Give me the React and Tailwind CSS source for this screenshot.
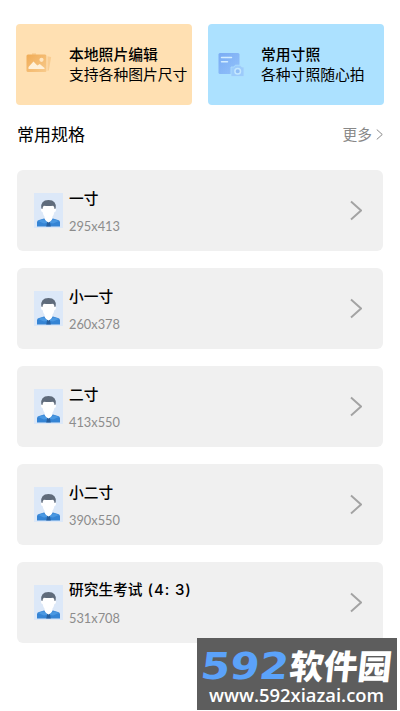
const specs = [
  { name: '一寸', size: '295x413' },
  { name: '小一寸', size: '260x378' },
  { name: '二寸', size: '413x550' },
  { name: '小二寸', size: '390x550' },
  { name: '研究生考试', ratio: '(4: 3)', size: '531x708' },
]

function PhotosIcon() {
  return (
    <svg width="28" height="24" viewBox="0 0 28 24" className="shrink-0">
      <defs>
        <linearGradient id="photos" x1="0" y1="0" x2="1" y2="1">
          <stop offset="0" stopColor="#f0ab55" />
          <stop offset="1" stopColor="#f8ca8b" />
        </linearGradient>
      </defs>
      <path d="M21 4l5.2 1-2.4 13.5-3.8 1z" fill="#f9cd92" />
      <path d="M7 1.2h4v2h-4z" fill="#f9cd92" />
      <rect x="1.5" y="2.5" width="20" height="17.5" rx="1.5" fill="url(#photos)" />
      <path d="M22 3.5v16" stroke="#ffe0b2" strokeWidth="1" />
      <circle cx="16.5" cy="7.8" r="2.1" fill="#ffe5bf" />
      <path d="M3.5 17v-2l5-5.5 3.8 4 2.5-1.5 4.7 4v1z" fill="#fff0d8" />
    </svg>
  )
}

function FormCameraIcon() {
  return (
    <svg width="28" height="26" viewBox="0 0 28 26" className="shrink-0">
      <defs>
        <linearGradient id="form" x1="0" y1="0" x2="1" y2="1">
          <stop offset="0" stopColor="#7aacf4" />
          <stop offset="1" stopColor="#92c1fa" />
        </linearGradient>
      </defs>
      <rect x="1.5" y="2" width="21" height="21" rx="1.5" fill="url(#form)" />
      <path d="M4.5 6.5h10M4.5 10.8h6" stroke="#d2edff" strokeWidth="1.5" strokeLinecap="round" />
      <path
        d="M14 16h3l1.3-1.8h5l1.3 1.8H27v9.5H14z"
        fill="#9ccbfb"
        stroke="#b0e0fe"
        strokeWidth=".8"
      />
      <circle cx="20.7" cy="20.2" r="2.8" fill="#8fbdf5" stroke="#c4e7fe" strokeWidth="1.5" />
    </svg>
  )
}

function PortraitIcon() {
  return (
    <svg width="29" height="35" viewBox="0 0 29 35" className="shrink-0">
      <rect width="29" height="35" fill="#dce8f8" />
      <path d="M3 33.5v-4.2q0-1.8 2-2.3l5-1.4h9l5 1.4q2 .5 2 2.3v4.2z" fill="#3584d4" />
      <path d="M4 28l5-1.8 5.5 3.3 5.5-3.3 5 1.8-6 2.5-4.5-1-4.5 1z" fill="#4a98e2" />
      <path d="M13.2 29h2.6l1 4.5h-4.6z" fill="#265f9f" />
      <path
        d="M8 12.5h13v2.6q1.4.5.9 2.3-.4 1.5-1.5 1.7-.5 3-2 4.6v2.2q-.9 2-3.9 3.6-3-1.6-3.9-3.6v-2.2q-1.5-1.6-2-4.6-1.1-.2-1.5-1.7-.5-1.8.9-2.3z"
        fill="#fff"
      />
      <path
        d="M7.3 15.5q-1.1-8.2 7.2-8.4 8.3.2 7.2 8.4l-1.2.5q0-2.2-1.4-3.2-4.6.6-9.2 0-1.4 1-1.4 3.2z"
        fill="#5f6b7b"
      />
    </svg>
  )
}

function Chevron({ className, strokeWidth }) {
  return (
    <svg viewBox="0 0 12 20" className={className} fill="none">
      <path d="M1 1l10 9-10 9" stroke="currentColor" strokeWidth={strokeWidth} />
    </svg>
  )
}

function FeatureCard({ icon, title, text, className }) {
  return (
    <div className={`flex h-[81px] w-44 items-center rounded-[4px] pb-0.5 pl-[9px] ${className}`}>
      {icon}
      <div className="ml-4 text-[14.8px] leading-5 whitespace-nowrap">
        <div className="font-medium">{title}</div>
        <div>{text}</div>
      </div>
    </div>
  )
}

function SpecRow({ name, ratio, size }) {
  return (
    <li className="flex h-[81px] items-center rounded-md bg-[#f0f0f0] pr-[21px] pl-[17px]">
      <PortraitIcon />
      <div className="ml-1.5 flex-1 pt-0.5">
        <div className="text-[14.7px] leading-5 font-medium">
          {name}
          {ratio && (
            <span className="ml-[5px] font-['Inter',sans-serif] text-[15px] tracking-[0.9px]">
              {ratio}
            </span>
          )}
        </div>
        <div className="mt-2 font-['Lato','Noto_Sans_CJK_SC',sans-serif] text-[12.8px] leading-5 text-[#8c8c8c]">
          {size}
        </div>
      </div>
      <Chevron className="h-[21px] w-3 text-[#a3a3a3]" strokeWidth={1.9} />
    </li>
  )
}

function Watermark() {
  return (
    <div className="absolute top-[638px] left-[197px] h-[72px] w-[200px] overflow-hidden bg-[#5d5d5d] text-white">
      <div className="flex h-[46px] items-center pt-2 pl-1">
        <span className="w-[89px] origin-left -skew-x-6 scale-x-[1.14] pt-0.5 font-['DejaVu_Sans',sans-serif] text-[37px] leading-none font-bold text-[#5ba2fa]">
          592
        </span>
        <span className="-skew-x-6 text-[34px] leading-none font-black whitespace-nowrap">软件园</span>
      </div>
      <div className="pl-3 font-['Open_Sans',sans-serif] text-[18.4px] leading-[22px] font-semibold">
        www.592xiazai.com
      </div>
    </div>
  )
}

export default function App() {
  return (
    <div className="relative h-[711px] w-[400px] overflow-hidden bg-white px-4 pt-6 font-['Noto_Sans_CJK_SC',sans-serif] text-black">
      <div className="flex gap-4">
        <FeatureCard
          icon={<PhotosIcon />}
          title="本地照片编辑"
          text="支持各种图片尺寸"
          className="bg-[#ffe0b2]"
        />
        <FeatureCard
          icon={<FormCameraIcon />}
          title="常用寸照"
          text="各种寸照随心拍"
          className="bg-[#ace1ff]"
        />
      </div>
      <div className="mt-[17px] flex h-6 items-center justify-between pr-px pl-px">
        <h2 className="text-[17px] leading-6">常用规格</h2>
        <div className="flex items-center gap-1 text-[14.7px] leading-5 text-[#888]">
          更多
          <Chevron className="h-[11px] w-[7px]" strokeWidth={1.8} />
        </div>
      </div>
      <ul className="mt-[24.4px] flex flex-col gap-[17px] px-px">
        {specs.map((spec) => (
          <SpecRow key={spec.name} {...spec} />
        ))}
      </ul>
      <Watermark />
    </div>
  )
}
